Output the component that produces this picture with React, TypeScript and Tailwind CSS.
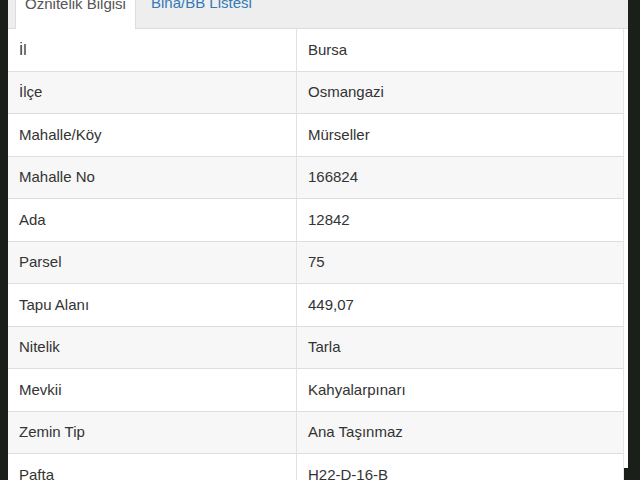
const rows: [string, string][] = [
  ['İl', 'Bursa'],
  ['İlçe', 'Osmangazi'],
  ['Mahalle/Köy', 'Mürseller'],
  ['Mahalle No', '166824'],
  ['Ada', '12842'],
  ['Parsel', '75'],
  ['Tapu Alanı', '449,07'],
  ['Nitelik', 'Tarla'],
  ['Mevkii', 'Kahyalarpınarı'],
  ['Zemin Tip', 'Ana Taşınmaz'],
  ['Pafta', 'H22-D-16-B'],
];

export default function App() {
  return (
    <div className="h-[480px] w-[640px] overflow-hidden bg-[#1b1f1a] pl-[8px] pr-[12px] font-['Liberation_Sans',Arial,sans-serif] text-[15px] text-[#333]">
      <div className="h-full bg-white">
        {/* Tabs, scrolled partly out of view */}
        <div className="-mt-[12px] flex h-[41px] border-b border-[#dcdcdc] bg-[#eeeeee] pl-[7px]">
          <div className="mb-[-1px] flex w-[121px] justify-center border-x border-t border-[#dddddd] bg-white pt-[4px] text-[#555]">
            Öznitelik Bilgisi
          </div>
          <div className="pl-[15px] pt-[4px] text-[#337ab7]">Bina/BB Listesi</div>
        </div>

        {/* Table */}
        <div className="mr-[4px] border-r border-[#e6e6e6]">
          {rows.map(([k, v], i) => (
            <div
              key={k}
              className={`flex h-[42.5px] items-center border-b border-[#dedede] ${i % 2 === 1 ? 'bg-[#f7f7f7]' : 'bg-white'}`}
            >
              <div className="flex h-full w-[289px] items-center border-r border-[#e2e2e2] pl-[11px]">{k}</div>
              <div className="pl-[11px]">{v}</div>
            </div>
          ))}
        </div>
      </div>
    </div>
  );
}
